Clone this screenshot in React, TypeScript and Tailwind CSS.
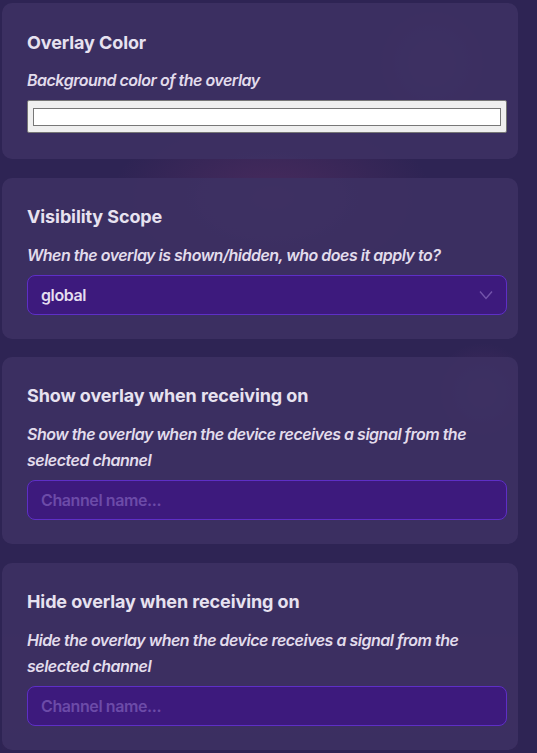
function Card({ title, desc, children, first }: { title: string; desc: string; children: React.ReactNode; first?: boolean }) {
  return (
    <div className={`rounded-[10px] bg-[#3d3163]/90 pl-[25px] pr-[11px] ${first ? 'pt-[26px] pb-[26px]' : 'pt-[25px] pb-[24px]'}`}>
      <h3 className={`text-[18px] leading-[27px] font-bold text-[#e7e2f0] tracking-[-0.1px] ${first ? 'mb-[11px]' : 'mb-[12px]'}`}>{title}</h3>
      <p className="text-[16px] leading-[26px] italic font-semibold text-[#e2dcec] mb-[7px] tracking-[-0.5px]">{desc}</p>
      {children}
    </div>
  )
}

function ChannelInput() {
  return (
    <div className="h-10 w-full rounded-lg border border-[#5e2fc6] bg-[#3d1a7d] px-[13px] flex items-center">
      <span className="text-[16px] font-semibold text-[#6c4ba8] tracking-[-0.4px]">Channel name...</span>
    </div>
  )
}

export default function App() {
  return (
    <div
      className="min-h-[753px] w-[537px] bg-[#2e2454] pt-[3px] pl-[2px] overflow-hidden"
      style={{ fontFamily: 'Inter, "Noto Sans", sans-serif' }}
    >
      <div
        className="w-[516px] flex flex-col gap-[18.5px]"
        style={{
          backgroundImage:
            'radial-gradient(circle at 430px 60px, rgba(110,60,120,0.35), transparent 60px), radial-gradient(ellipse 160px 90px at 270px 195px, rgba(120,55,110,0.35), transparent), radial-gradient(circle at 480px 390px, rgba(110,60,120,0.3), transparent 50px), linear-gradient(to bottom, transparent 620px, rgba(90,40,90,0.25) 660px, transparent 760px)',
        }}
      >
        {/* Overlay color */}
        <Card first title="Overlay Color" desc="Background color of the overlay">
          <div className="h-[33px] w-full rounded-[2px] border border-[#767676] bg-[#efefef] px-[5px] pt-[7px] pb-[6px]">
            <div className="h-full w-full border border-[#777777] bg-white" />
          </div>
        </Card>

        {/* Visibility scope */}
        <Card title="Visibility Scope" desc="When the overlay is shown/hidden, who does it apply to?">
          <div className="h-10 w-full rounded-lg border border-[#5e2fc6] bg-[#3d1a7d] pl-[13px] pr-[13px] flex items-center justify-between">
            <span className="text-[16px] font-semibold text-[#e4def0] tracking-[-0.4px]">global</span>
            <svg width="14" height="10" viewBox="0 0 14 10" fill="none" className="mt-[1px]">
              <polyline points="1,1.5 7,8.5 13,1.5" stroke="#7354ab" strokeWidth="1.4" />
            </svg>
          </div>
        </Card>

        <Card
          title="Show overlay when receiving on"
          desc="Show the overlay when the device receives a signal from the selected channel"
        >
          <ChannelInput />
        </Card>

        <Card
          title="Hide overlay when receiving on"
          desc="Hide the overlay when the device receives a signal from the selected channel"
        >
          <ChannelInput />
        </Card>
      </div>
    </div>
  )
}
